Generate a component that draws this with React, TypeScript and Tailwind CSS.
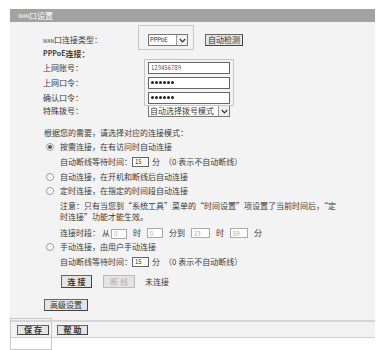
import React from 'react';

const Chevron: React.FC = () => (
  <svg width="7" height="5" viewBox="0 0 7 5" className="block">
    <polyline points="0.8,1 3.5,3.8 6.2,1" fill="none" stroke="#333" strokeWidth="1.2" />
  </svg>
);

const Select: React.FC<{ value: string; width: string; small?: boolean }> = ({ value, width, small }) => (
  <div className={`flex h-[12px] ${width} items-stretch border border-[#777] bg-white`}>
    <span className={`flex-1 overflow-hidden whitespace-nowrap pl-[1px] leading-[10px] ${small ? 'text-[6px] leading-[10px] tracking-tight' : 'text-[8px]'}`}>{value}</span>
    <span className="flex w-[11px] items-center justify-center border-l border-[#999] bg-[#f0f0f0]">
      <Chevron />
    </span>
  </div>
);

const Btn: React.FC<{ label: string; w: string; bold?: boolean; disabled?: boolean; h?: string }> = ({ label, w, bold, disabled, h = 'h-[12px]' }) => (
  <div
    className={`flex ${h} ${w} items-center justify-center border bg-[#e4e4e4] text-[8px] ${
      disabled ? 'border-[#bbb] text-[#b0b0b0]' : 'border-[#666] border-r-[#444] border-b-[#444] text-[#333]'
    } ${bold ? 'font-bold' : ''}`}
  >
    {label}
  </div>
);

const Radio: React.FC<{ checked?: boolean }> = ({ checked }) => (
  <span className="mr-[6px] flex h-[8px] w-[8px] items-center justify-center rounded-full border border-[#999] bg-white">
    {checked && <span className="h-[4px] w-[4px] rounded-full bg-[#555]" />}
  </span>
);

const Box: React.FC<{ v: string; w: string; disabled?: boolean }> = ({ v, w, disabled }) => (
  <span
    className={`inline-flex h-[10px] ${w} items-center border bg-white pl-[2px] text-[6px] ${
      disabled ? 'border-[#aaa] text-[#aaa]' : 'border-[#666] text-[#333]'
    }`}
  >
    {v}
  </span>
);

const Dots: React.FC = () => (
  <div className="flex h-[12px] w-[82px] items-center gap-[1px] border border-[#666] bg-white pl-[2px]">
    {[0, 1, 2, 3, 4, 5].map(i => (
      <span key={i} className="h-[3px] w-[3px] rounded-full bg-[#222]" />
    ))}
  </div>
);

export default function App() {
  return (
    <div className="h-[350px] w-[387px] bg-white pl-[10px] pt-[9px] font-['Noto_Sans_CJK_SC','Noto_Sans',sans-serif] text-[8px] text-[#3a3a3a]">
      <div className="w-[365px]">
        <div className="flex h-[13px] items-center bg-[#a2a2a2] pl-[8px] text-[8px] text-white">
          <span className="text-[5px]">WAN</span>口设置
        </div>

        <div className="relative bg-[#f3f3f3] pb-[9px] pl-[33px] pt-[11px]">
          {/* highlight frames */}
          <div className="absolute left-[128px] top-[3px] h-[25px] w-[56px] border border-[#c8c8c8]" />
          <div className="absolute left-[134px] top-[37px] h-[47px] w-[90px] border border-[#c8c8c8]" />

          <div className="flex h-[14px] items-center">
            <span className="w-[105px]"><span className="text-[5px]">WAN</span>口连接类型：</span>
            <Select value="PPPoE" width="w-[40px]" small />
            <div className="ml-[17px]">
              <Btn label="自动检测" w="w-[38px]" />
            </div>
          </div>
          <div className="flex h-[13px] items-center font-bold">
            <span className="text-[7px]">PPPoE</span>连接：
          </div>
          <div className="flex h-[15px] items-center">
            <span className="w-[105px]">上网账号：</span>
            <div className="flex h-[12px] w-[82px] items-center border border-[#666] bg-white pl-[2px] text-[6px] text-[#555]">123456789</div>
          </div>
          <div className="flex h-[15px] items-center">
            <span className="w-[105px]">上网口令：</span>
            <Dots />
          </div>
          <div className="flex h-[15px] items-center">
            <span className="w-[105px]">确认口令：</span>
            <Dots />
          </div>
          <div className="flex h-[12px] items-center">
            <span className="w-[105px]">特殊拨号：</span>
            <Select value="自动选择拨号模式" width="w-[82px]" />
          </div>

          <div className="mt-[9px] flex h-[14px] items-center pl-[1px]">根据您的需要，请选择对应的连接模式：</div>
          <div className="flex h-[14px] items-center pl-[3px]">
            <Radio checked />按需连接，在有访问时自动连接
          </div>
          <div className="flex h-[15px] items-center pl-[17px]">
            自动断线等待时间：<Box v="15" w="w-[17px]" />
            <span className="ml-[3px]">分</span>
            <span className="ml-[4px]">（0 表示不自动断线）</span>
          </div>
          <div className="flex h-[15px] items-center pl-[3px]">
            <Radio />自动连接，在开机和断线后自动连接
          </div>
          <div className="flex h-[14px] items-center pl-[3px]">
            <Radio />定时连接，在指定的时间段自动连接
          </div>
          <div className="mt-[2px] whitespace-nowrap pl-[17px] leading-[11px]">
            注意：只有当您到“系统工具”菜单的“时间设置”项设置了当前时间后，“定<br />
            时连接”功能才能生效。
          </div>
          <div className="mt-[4px] flex h-[14px] items-center pl-[17px]">
            连接时段：<span className="ml-[2px]">从</span>
            <span className="ml-[1px]"><Box v="0" w="w-[16px]" disabled /></span>
            <span className="mx-[6px]">时</span>
            <Box v="0" w="w-[16px]" disabled />
            <span className="mx-[6px]">分到</span>
            <Box v="23" w="w-[19px]" disabled />
            <span className="mx-[6px]">时</span>
            <Box v="59" w="w-[18px]" disabled />
            <span className="ml-[6px]">分</span>
          </div>
          <div className="flex h-[14px] items-center pl-[3px]">
            <Radio />手动连接，由用户手动连接
          </div>
          <div className="flex h-[15px] items-center pl-[17px]">
            自动断线等待时间：<Box v="15" w="w-[17px]" />
            <span className="ml-[3px]">分</span>
            <span className="ml-[4px]">（0 表示不自动断线）</span>
          </div>
          <div className="mt-[6px] flex h-[13px] items-center pl-[18px]">
            <Btn label="连 接" w="w-[31px]" h="h-[13px]" bold />
            <div className="ml-[11px]">
              <Btn label="断 线" w="w-[32px]" h="h-[13px]" disabled />
            </div>
            <span className="ml-[10px]">未连接</span>
          </div>
          <div className="mt-[11px] flex h-[12px] items-center pl-[1px]">
            <Btn label="高级设置" w="w-[44px]" />
          </div>
        </div>

        <div className="relative flex h-[18px] items-center gap-[8px] border-b border-t-2 border-b-[#d0d0d0] border-t-[#d6d6d6] bg-[#f3f3f3] pl-[7px]">
          <div className="absolute left-0 top-[-4px] h-[32px] w-[42px] border border-[#c8c8c8]" />
          <Btn label="保 存" w="w-[32px]" h="h-[10px]" bold />
          <Btn label="帮 助" w="w-[31px]" h="h-[10px]" bold />
        </div>
      </div>
    </div>
  );
}
